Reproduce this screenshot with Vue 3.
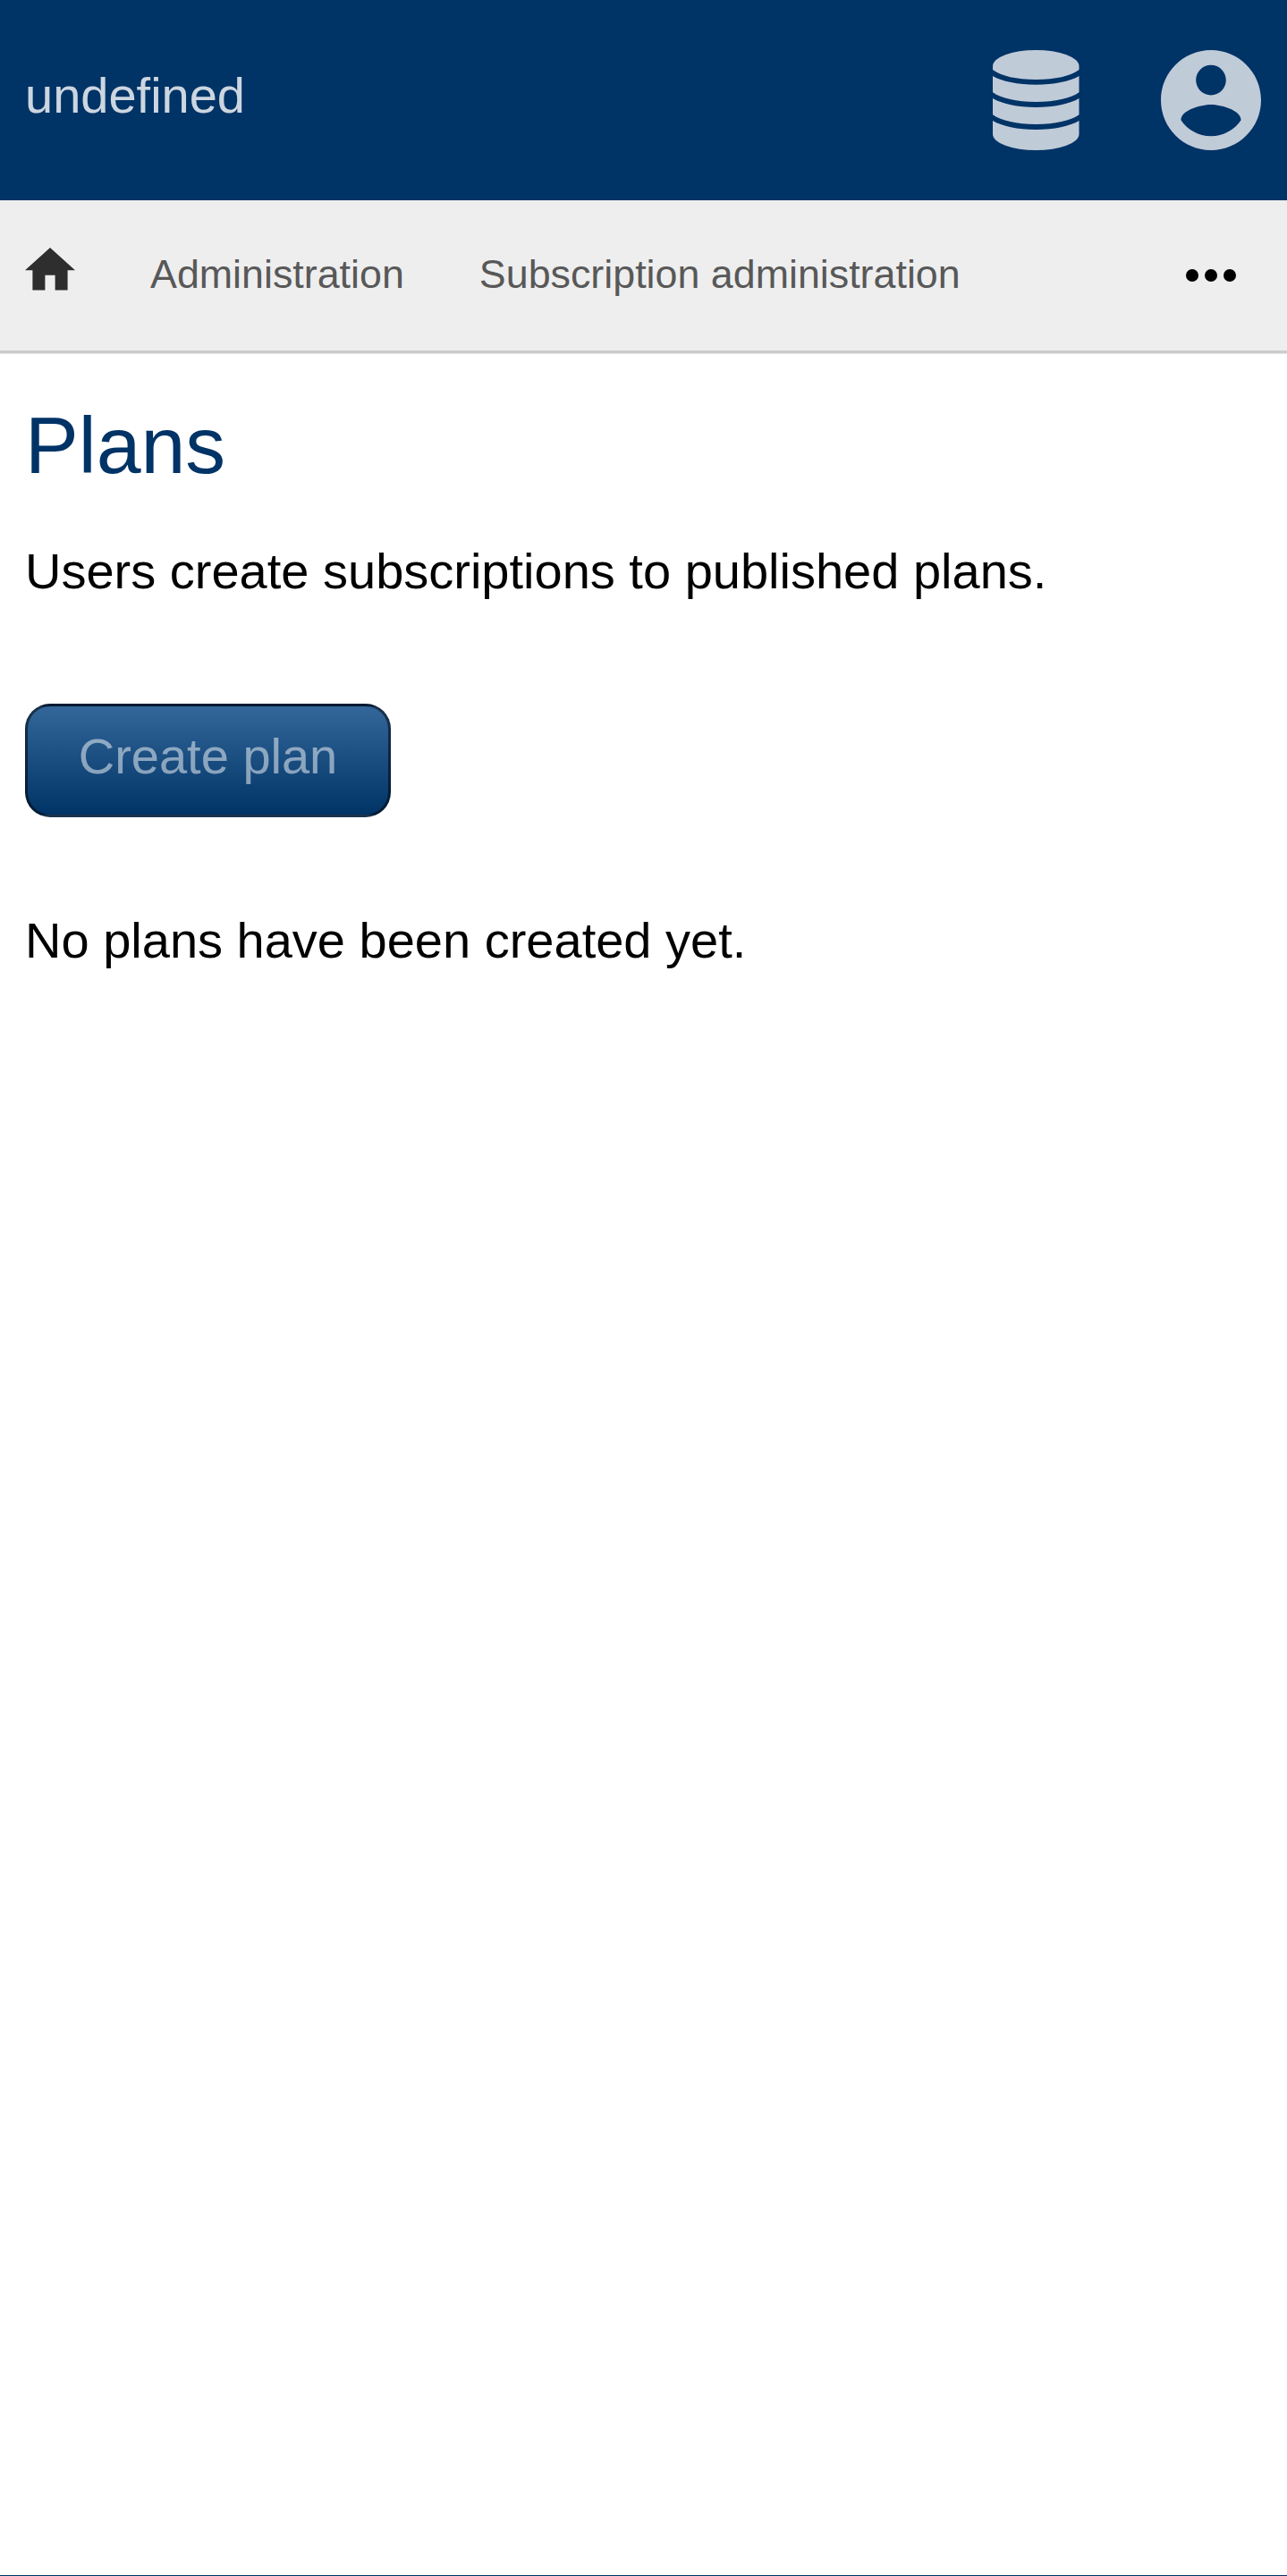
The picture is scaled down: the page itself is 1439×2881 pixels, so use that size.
<script setup>
const crumbs = ['Administration', 'Subscription administration']
</script>

<template>
  <div class="page">
    <header class="header">
      <span class="title">undefined</span>
      <div class="actions">
        <svg class="credits" viewBox="0 0 96.500 112">
          <path d="M0 18A48.250 18 0 0 1 96.500 18V22C87 29 70 33 48.250 33S9.500 29 0 22Z" />
          <path d="M0 29C10 35 28 38.700 48.250 38.700S86.500 35 96.500 29V47.300C87 54 70 58 48.250 58S9.500 54 0 47.300Z" />
          <path d="M0 54C10 60 28 64 48.250 64S86.500 60 96.500 54V72.300C87 79 70 83 48.250 83S9.500 79 0 72.300Z" />
          <path d="M0 79C10 85 28 89 48.250 89S86.500 85 96.500 79V94A48.250 18 0 0 1 0 94Z" />
        </svg>
        <svg class="account" viewBox="2 2 20 20">
          <path d="M12 2C6.480 2 2 6.480 2 12s4.480 10 10 10 10-4.480 10-10S17.520 2 12 2zm0 3c1.660 0 3 1.340 3 3s-1.340 3-3 3-3-1.340-3-3 1.340-3 3-3zm0 14.200c-2.500 0-4.710-1.280-6-3.220.030-1.990 4-3.080 6-3.080 1.990 0 5.970 1.090 6 3.080-1.290 1.940-3.500 3.220-6 3.220z" />
        </svg>
      </div>
    </header>

    <nav class="nav">
      <svg class="home" viewBox="2 3 20 17">
        <path d="M10 20v-6h4v6h5v-8h3L12 3 2 12h3v8z" />
      </svg>
      <span v-for="crumb in crumbs" :key="crumb" class="crumb">{{ crumb }}</span>
      <svg class="more" viewBox="4 10 16 4">
        <circle cx="6" cy="12" r="2" />
        <circle cx="12" cy="12" r="2" />
        <circle cx="18" cy="12" r="2" />
      </svg>
    </nav>

    <main class="content">
      <h1>Plans</h1>
      <p>Users create subscriptions to published plans.</p>
      <button class="create" type="button"><span>Create plan</span></button>
      <p>No plans have been created yet.</p>
    </main>

    <footer class="footer"></footer>
  </div>
</template>

<style>
body {
  margin: 0;
  background: #fff;
}
</style>

<style scoped>
.page {
  display: flex;
  flex-direction: column;
  height: 2881px;
  font-family: "Liberation Sans", Arial, sans-serif;
  font-size: 56px;
  line-height: 63px;
  color: #000;
}

.page svg {
  display: block;
  flex: none;
}

.header {
  display: flex;
  justify-content: space-between;
  align-items: flex-start;
  box-sizing: border-box;
  flex: none;
  height: 224px;
  padding: 56px 28.600px 0 28px;
  background: #036;
}

.title {
  margin-top: 19px;
  color: rgba(255, 255, 255, 0.8);
}

.actions {
  display: flex;
  gap: 91.900px;
  fill: #c0cbd8;
}

.credits {
  width: 96.500px;
  height: 112px;
}

.account {
  width: 112px;
  height: 112px;
}

.nav {
  display: flex;
  align-items: flex-start;
  box-sizing: border-box;
  flex: none;
  height: 168px;
  padding: 53px 56.600px 0 28px;
  background: #eee;
  box-shadow: 0 3.500px 0 #ccc;
  font-size: 44.800px;
  line-height: 51px;
}

.home {
  width: 56px;
  height: 47.600px;
  fill: #2e2e2e;
}

.crumb {
  margin: 4px 0 0 84px;
  color: #585858;
}

.more {
  width: 56px;
  height: 14px;
  margin: 24px 0 0 auto;
}

.content {
  display: flex;
  flex-direction: column;
  align-items: flex-start;
  flex: 1;
  padding: 56px 28px 0;
}

h1 {
  margin: 0;
  font-size: 89.600px;
  font-weight: 400;
  line-height: 100px;
  color: #036;
}

p {
  margin: 0;
}

h1 + p {
  margin-top: 59px;
}

.create {
  box-sizing: border-box;
  width: 409px;
  height: 126.600px;
  margin: 117.300px 0 106.100px;
  padding: 23.700px 0 33.900px;
  border: 3.500px solid rgba(0, 0, 0, 0.5);
  border-radius: 28px;
  background: linear-gradient(#369, #036);
  font: inherit;
  color: #fff;
}

.create span {
  opacity: 0.5;
}

.footer {
  flex: none;
  height: 1px;
  background: #036;
}
</style>
